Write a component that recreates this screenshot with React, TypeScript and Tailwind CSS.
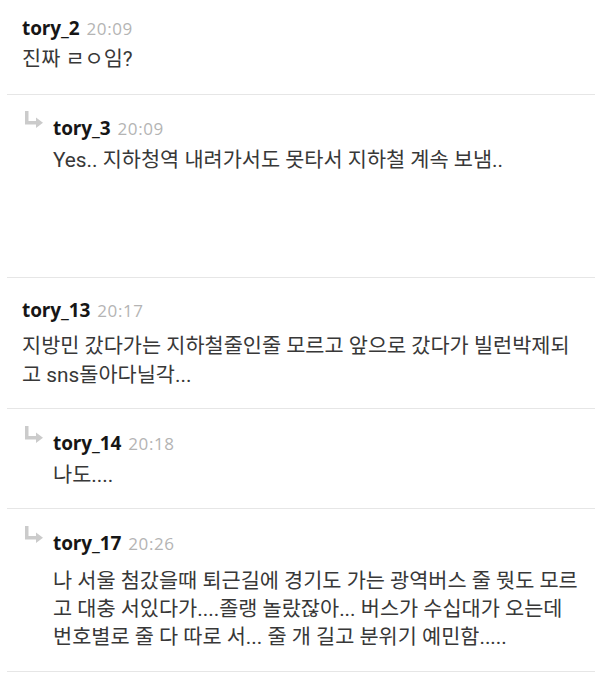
import React from "react";

function ReplyArrow() {
  return (
    <svg width="18" height="17" viewBox="0 0 18 17" className="-mt-[5px] block" aria-hidden="true">
      <path d="M0 0 H3.5 V10 H11 V6.5 L18 11.75 L11 17 V13.5 H0 Z" fill="#cbcbcb" />
    </svg>
  );
}

function NameRow({ name, time }: { name: string; time: string }) {
  return (
    <div className="flex items-baseline h-[24px] leading-[24px] font-['Open_Sans',sans-serif]">
      <span className="text-[19px] font-bold text-[#161616] tracking-[-0.1px]">{name}</span>
      <span className="ml-[7px] text-[17px] text-[#b4b4b4] tracking-[0.6px]">{time}</span>
    </div>
  );
}

function Body({ lines, lh, mt }: { lines: string[]; lh: string; mt: string }) {
  return (
    <div className={`${mt} text-[20.8px] ${lh} text-[#383838] font-['Roboto','Noto_Sans_CJK_KR',sans-serif] whitespace-nowrap`}>
      {lines.map((l, i) => (
        <div key={i}>{l}</div>
      ))}
    </div>
  );
}

export default function App() {
  return (
    <div className="w-[600px] h-[681px] bg-white overflow-hidden">
      <div className="ml-[7px] mr-[5px]">
        {/* Comment 1 */}
        <div className="border-b border-[#e6e6e6] pl-[15px] pt-[16px] pb-[20px]">
          <NameRow name="tory_2" time="20:09" />
          <Body lines={["진짜 ㄹㅇ임?"]} lh="leading-[29px]" mt="mt-[5px]" />
        </div>

        {/* Reply: tory_3 */}
        <div className="border-b border-[#e6e6e6] pl-[18px] pt-[21px] pb-[102px] grid grid-cols-[28px_1fr]">
          <ReplyArrow />
          <NameRow name="tory_3" time="20:09" />
          <div />
          <Body lines={["Yes.. 지하청역 내려가서도 못타서 지하철 계속 보냄.."]} lh="leading-[29px]" mt="mt-[6px]" />
        </div>

        {/* Comment tory_13 */}
        <div className="border-b border-[#e6e6e6] pl-[15px] pt-[20px] pb-[18px]">
          <NameRow name="tory_13" time="20:17" />
          <Body
            lines={["지방민 갔다가는 지하철줄인줄 모르고 앞으로 갔다가 빌런박제되", "고 sns돌아다닐각..."]}
            lh="leading-[29px]"
            mt="mt-[10px]"
          />
        </div>

        {/* Reply: tory_14 */}
        <div className="border-b border-[#e6e6e6] pl-[18px] pt-[22px] pb-[18px] grid grid-cols-[28px_1fr]">
          <ReplyArrow />
          <NameRow name="tory_14" time="20:18" />
          <div />
          <Body lines={["나도...."]} lh="leading-[29px]" mt="mt-[6px]" />
        </div>

        {/* Reply: tory_17 */}
        <div className="border-b border-[#e6e6e6] pl-[18px] pt-[22px] pb-[20px] grid grid-cols-[28px_1fr]">
          <ReplyArrow />
          <NameRow name="tory_17" time="20:26" />
          <div />
          <Body
            lines={[
              "나 서울 첨갔을때 퇴근길에 경기도 가는 광역버스 줄 뭣도 모르",
              "고 대충 서있다가....졸랭 놀랐잖아... 버스가 수십대가 오는데",
              "번호별로 줄 다 따로 서... 줄 개 길고 분위기 예민함.....",
            ]}
            lh="leading-[28px]"
            mt="mt-[12px]"
          />
        </div>
      </div>
    </div>
  );
}
